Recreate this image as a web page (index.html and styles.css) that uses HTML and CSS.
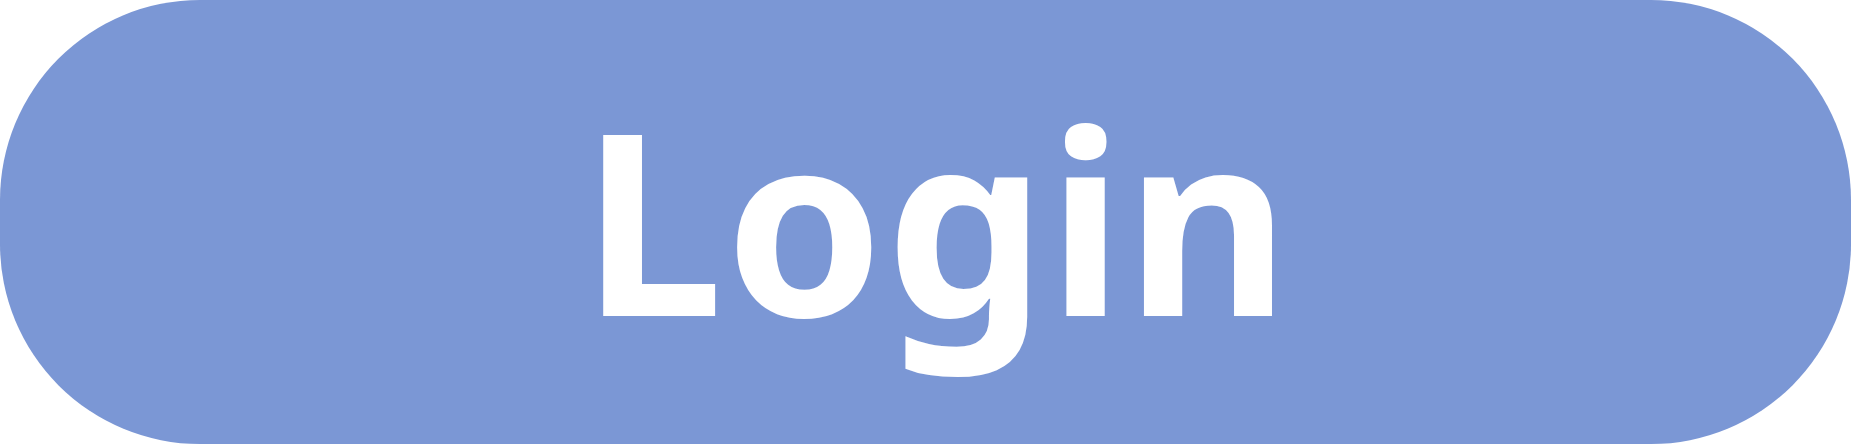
FILE: index.html
```html
<!DOCTYPE html>
<html lang="en">
<head>
<meta charset="utf-8">
<title>Login</title>
<link rel="stylesheet" href="styles.css">
</head>
<body>
<button class="login-btn" type="button"><span class="login-label">Login</span></button>
</body>
</html>
```

FILE: styles.css
```css
html, body {
  margin: 0;
  padding: 0;
  background: #ffffff;
}
body {
  width: 1852px;
  height: 444px;
  overflow: hidden;
}
.login-btn {
  display: flex;
  align-items: center;
  justify-content: center;
  box-sizing: border-box;
  width: 1851px;
  height: 444px;
  margin: 0;
  padding: 0 0 8px 23px;
  border: none;
  border-radius: 200px;
  background: #7b97d5;
  color: #ffffff;
  font-family: "Noto Sans", Inter, sans-serif;
  font-weight: 700;
  font-size: 253px;
  line-height: 1;
  letter-spacing: 2.2px;
  cursor: pointer;
}
.login-label {
  display: block;
}
```
